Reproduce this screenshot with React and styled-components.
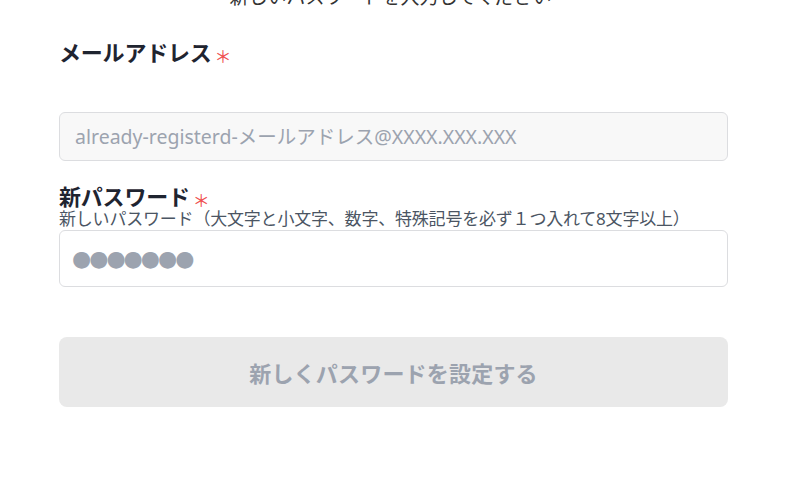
import React from "react";
import styled, { createGlobalStyle } from "styled-components";

const GlobalStyle = createGlobalStyle`
  * {
    box-sizing: border-box;
  }
  body {
    margin: 0;
    background: #fff;
    font-family: "Noto Sans", "Noto Sans CJK JP", sans-serif;
    color: #1f2430;
  }
`;

const Page = styled.main`
  padding: 0 70px 0 59px;
  overflow: hidden;
  height: 494px;
`;

const Title = styled.h1`
  margin: -17px 0 0;
  font-size: 19px;
  line-height: 28px;
  font-weight: 400;
  color: #333;
  text-align: center;
  padding-right: 6px;
`;

const Form = styled.form`
  display: flex;
  flex-direction: column;
`;

const Field = styled.div`
  display: flex;
  flex-direction: column;
  margin-top: ${(p) => p.$top}px;
`;

const Label = styled.label`
  display: block;
  height: 28px;
  font-size: 22px;
  line-height: 28px;
  font-weight: 700;
  color: #1f2430;
  letter-spacing: -0.2px;
`;

const Required = styled.span`
  color: #ef4f4f;
  font-family: "Noto Sans CJK JP", sans-serif;
  font-weight: 400;
  font-size: 17px;
  line-height: 0;
  margin-left: 3px;
  vertical-align: -2px;
`;

const Hint = styled.p`
  margin: 0;
  font-size: 17px;
  line-height: 18px;
  color: #4b5563;
  letter-spacing: -0.2px;
`;

const Input = styled.input`
  width: 100%;
  height: ${(p) => p.$height}px;
  margin-top: ${(p) => p.$gap}px;
  padding: 0 15px;
  border: 1px solid #dcdde0;
  border-radius: 6px;
  background: ${(p) => (p.$muted ? "#f8f8f8" : "#fff")};
  font-family: inherit;
  font-size: 19.5px;
  color: #9ca3af;
  outline: none;

  &::placeholder {
    color: #9ca3af;
  }
`;

const MaskedInput = styled(Input)`
  padding-left: 12px;
  font-family: "DejaVu Sans", sans-serif;
  font-size: 22px;
  letter-spacing: -2px;
`;

const Submit = styled.button`
  margin-top: 50px;
  height: 70px;
  width: 100%;
  border: none;
  border-radius: 8px;
  background: #e9e9e9;
  font-family: inherit;
  font-size: 22px;
  font-weight: 700;
  color: #9ca3af;
  letter-spacing: 0.2px;
`;

export default function App() {
  return (
    <>
      <GlobalStyle />
      <Page>
        <Title>新しいパスワードを入力してください</Title>
        <Form onSubmit={(e) => e.preventDefault()}>
          <Field $top={27}>
            <Label>
              メールアドレス<Required>＊</Required>
            </Label>
            <Input
              $muted
              $height={49}
              $gap={46}
              readOnly
              placeholder="already-registerd-メールアドレス@XXXX.XXX.XXX"
            />
          </Field>
          <Field $top={21}>
            <Label>
              新パスワード<Required>＊</Required>
            </Label>
            <Hint>
              新しいパスワード（大文字と小文字、数字、特殊記号を必ず１つ入れて8文字以上）
            </Hint>
            <MaskedInput
              $height={57}
              $gap={2}
              readOnly
              aria-label="新パスワード"
              value="●●●●●●●"
            />
          </Field>
          <Submit type="submit" disabled>
            新しくパスワードを設定する
          </Submit>
        </Form>
      </Page>
    </>
  );
}
